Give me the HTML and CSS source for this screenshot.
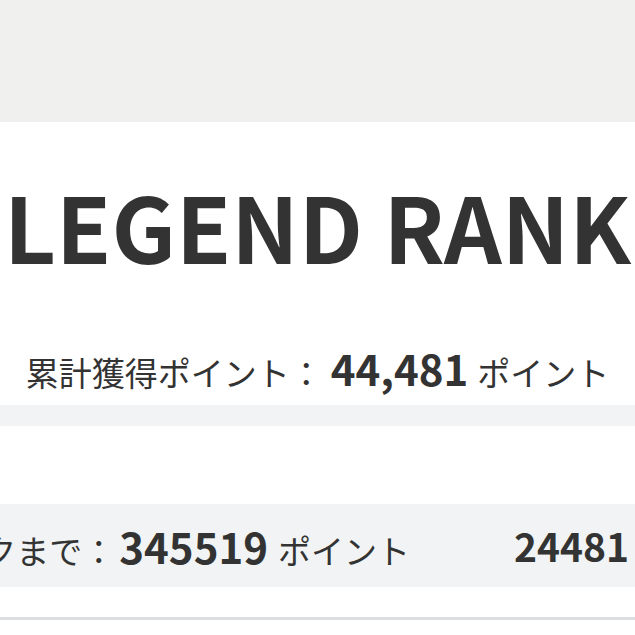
FILE: index.html
```html
<!DOCTYPE html>
<html lang="ja">
<head>
<meta charset="utf-8">
<title>Legend Rank</title>
<link rel="stylesheet" href="styles.css">
</head>
<body>
<div class="top"></div>
<main class="card">
  <h1 class="rank">LEGEND RANK</h1>
  <p class="total"><span class="label">累計獲得ポイント：</span><span class="num">44,481</span><span class="unit">ポイント</span></p>
  <div class="band"></div>
  <div class="gap"></div>
  <div class="row">
    <div class="row-left"><span class="label">次のランクまで：</span><span class="num num-b">345519</span><span class="unit">ポイント</span></div>
    <div class="row-right"><span class="num num-r">24481</span></div>
  </div>
  <div class="after"></div>
</main>
</body>
</html>
```
FILE: styles.css
```css
html, body {
  margin: 0;
  padding: 0;
  background: #ffffff;
  overflow: hidden;
}
body {
  font-family: "Noto Sans CJK JP", "Noto Sans", sans-serif;
  color: #333333;
}
.top {
  height: 122px;
  background: #f0f0ef;
}
.card {
  background: #ffffff;
}
.rank {
  margin: 0;
  padding-top: 58px;
  font-size: 90px;
  line-height: 1;
  font-weight: 700;
  text-align: center;
  white-space: nowrap;
}
.total {
  margin: 77px 0 13px;
  display: flex;
  justify-content: center;
  align-items: baseline;
  white-space: nowrap;
  line-height: 1;
  height: 45px;
}
.label, .unit {
  font-size: 33px;
  font-weight: 400;
}
.num {
  font-size: 42px;
  font-weight: 700;
}
.total .num {
  margin: 0 9px 0 8px;
}
.band {
  height: 21px;
  background: #f1f3f4;
}
.gap {
  height: 78px;
}
.row {
  height: 83px;
  background: #f1f3f4;
  display: flex;
  align-items: center;
  justify-content: space-between;
  padding-right: 6px;
}
.row-left {
  width: 410px;
  flex: none;
  display: flex;
  justify-content: flex-end;
  align-items: baseline;
  white-space: nowrap;
  line-height: 1;
}
.num-b {
  margin: 0 10px 0 4px;
}
.row-right {
  line-height: 1;
}
.num-r {
  font-size: 39px;
}
.after {
  height: 30px;
  border-bottom: 3px solid #dddee1;
}
```
